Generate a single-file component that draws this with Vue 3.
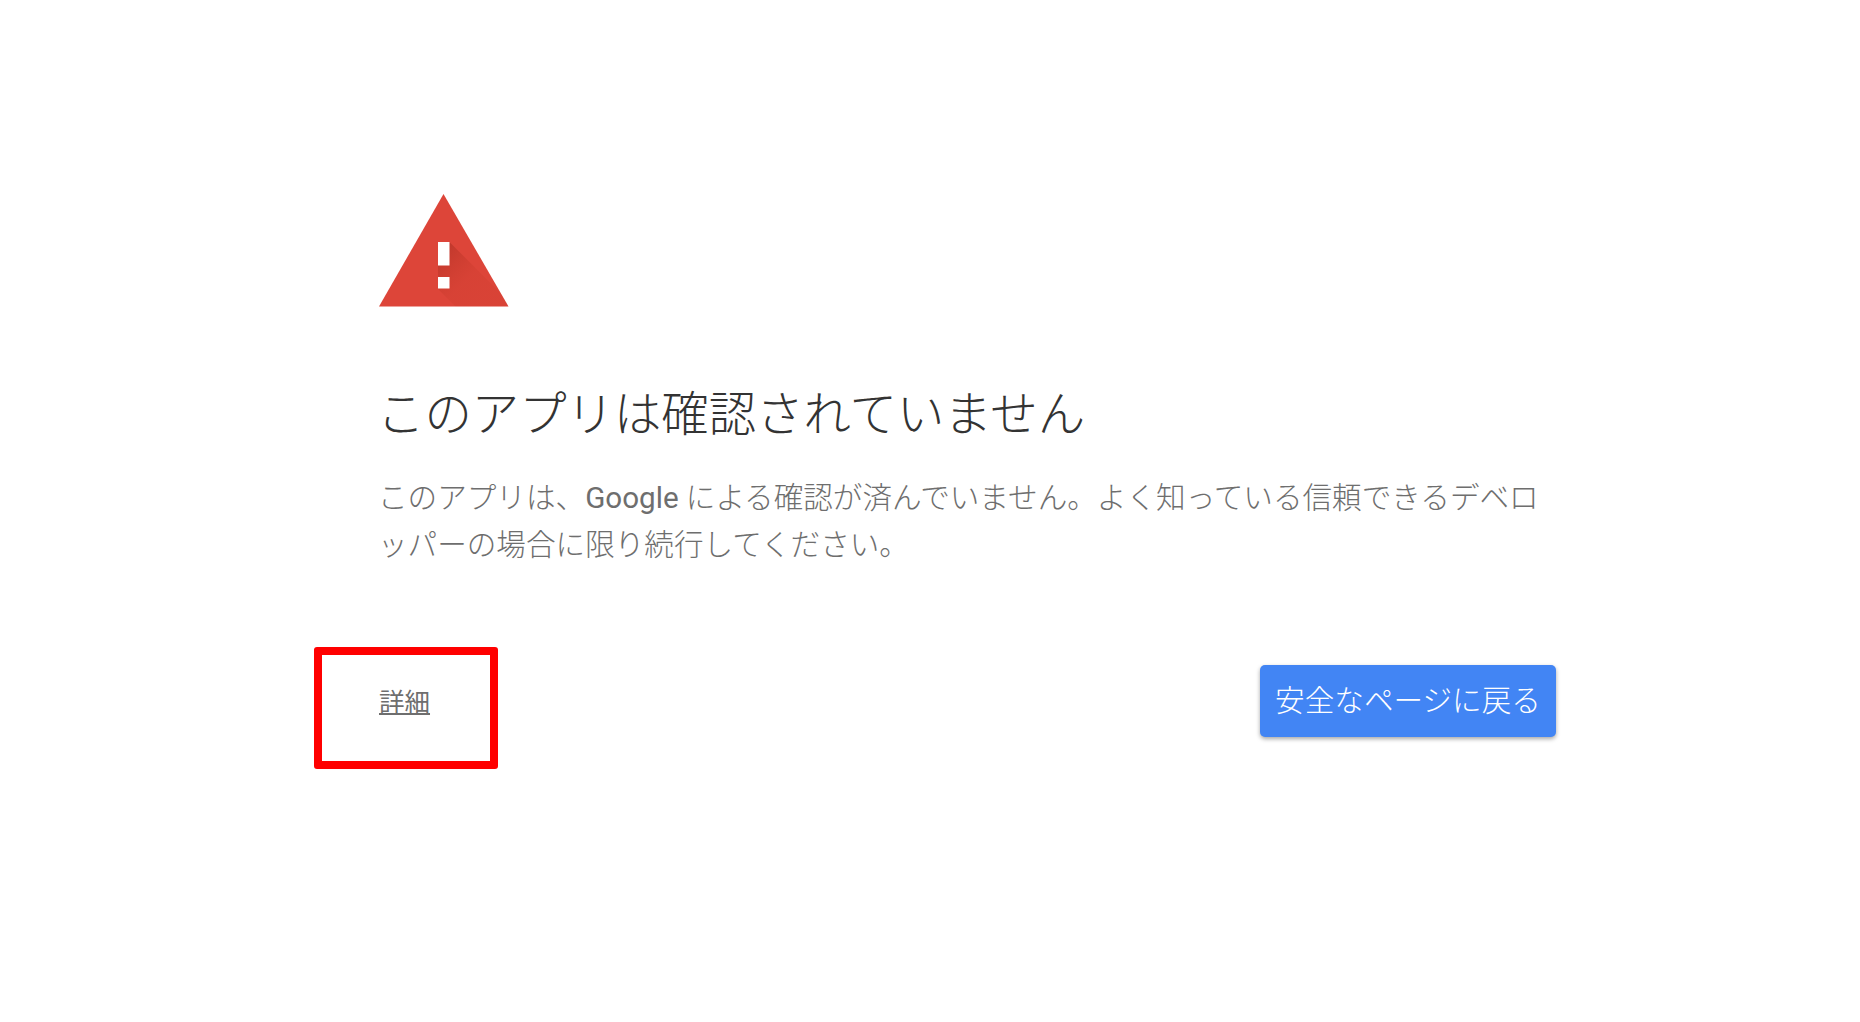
<script setup>
const title = 'このアプリは確認されていません'
</script>

<template>
  <div class="page">
    <main class="panel">
      <svg class="warning" viewBox="0 0 130 113" width="130" height="113">
        <defs>
          <linearGradient id="fold" gradientUnits="userSpaceOnUse" x1="60" y1="60" x2="104" y2="104">
            <stop offset="0" stop-color="#7a1a0c" stop-opacity="0.28" />
            <stop offset="0.6" stop-color="#a52714" stop-opacity="0.1" />
            <stop offset="1" stop-color="#a52714" stop-opacity="0.08" />
          </linearGradient>
          <clipPath id="tri">
            <polygon points="64.5,0 129.5,112.5 0,112.5" />
          </clipPath>
        </defs>
        <polygon points="64.5,0 129.5,112.5 0,112.5" fill="#dd4539" />
        <polygon clip-path="url(#tri)" points="70.5,48 135,112.5 76.5,112.5 59,95 59,48" fill="url(#fold)" />
        <rect x="59" y="48" width="11.5" height="23.5" fill="#fff" />
        <rect x="59" y="83" width="11.5" height="11.5" fill="#fff" />
      </svg>

      <h1 class="title">{{ title }}</h1>
      <p class="message">このアプリは、<span class="brand">Google</span> による確認が済んでいません。よく知っている信頼できるデベロ<br />ッパーの場合に限り続行してください。</p>

      <div class="actions">
        <span class="details-wrap">
          <a class="details" href="#">詳細</a>
          <span class="marker"></span>
        </span>
        <button class="back" type="button">安全なページに戻る</button>
      </div>
    </main>
  </div>
</template>

<style>
html, body {
  margin: 0;
  background: #fff;
}
</style>

<style scoped>
.page {
  width: 1860px;
  height: 1022px;
  box-sizing: border-box;
  padding: 194px 304px 0 380px;
  overflow: hidden;
  font-family: Roboto, "Noto Sans CJK JP", "Liberation Sans", sans-serif;
}

.panel {
  width: 1176px;
}

.warning {
  display: block;
  margin-left: -1px;
}

.title {
  margin: 80px 0 0 -3px;
  font-size: 47.4px;
  line-height: 56px;
  font-weight: 300;
  color: #333;
}

.message {
  margin: 32px 0 0 -2px;
  font-size: 29.6px;
  line-height: 47px;
  font-weight: 300;
  color: #6e6e6e;
}

.brand {
  font-weight: 400;
}

.actions {
  display: flex;
  justify-content: space-between;
  align-items: center;
  margin-top: 96px;
}

.details-wrap {
  position: relative;
  margin-left: -1px;
  padding-bottom: 3px;
}

.details {
  font-size: 25.5px;
  color: #6e6e6e;
  text-decoration: underline;
}

.marker {
  position: absolute;
  left: -65px;
  top: -34px;
  width: 184px;
  height: 122px;
  box-sizing: border-box;
  border: 8px solid #f00;
  border-radius: 3px;
}

.back {
  width: 296px;
  height: 72px;
  padding: 0 0 6px;
  border: none;
  border-radius: 5px;
  background: #4285f4;
  color: #fff;
  font-family: inherit;
  font-size: 29.6px;
  font-weight: 300;
  box-shadow: 0 2px 4px rgba(0, 0, 0, 0.35);
}
</style>
